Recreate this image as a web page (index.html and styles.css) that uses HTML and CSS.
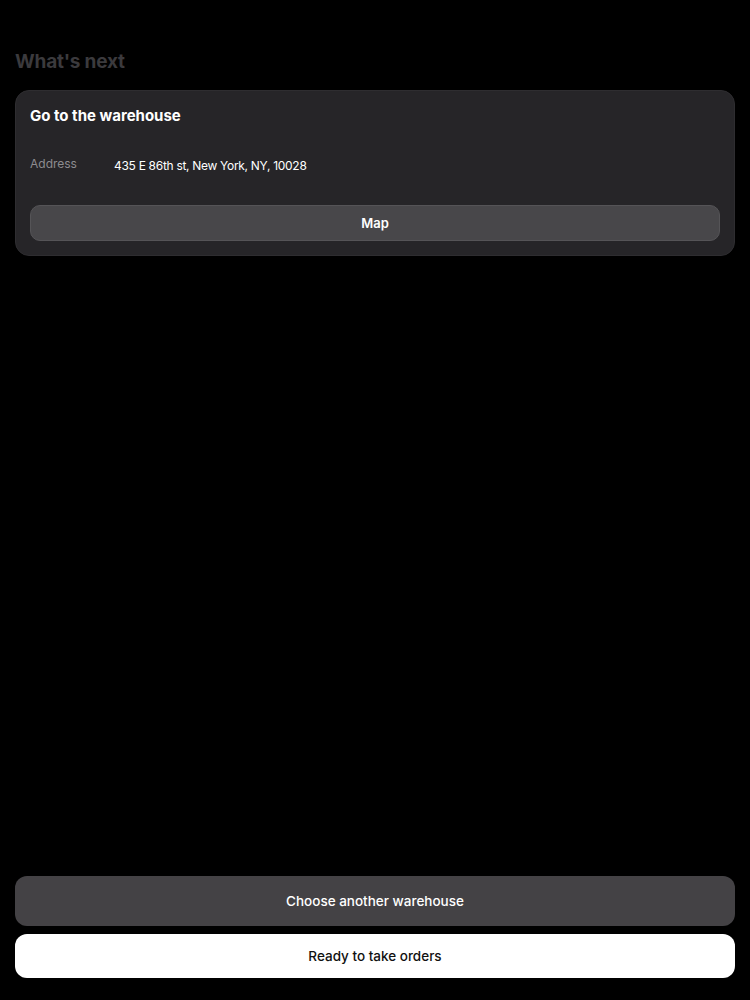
FILE: index.html
```html
<!DOCTYPE html>
<html>
<head>
<meta charset="utf-8">
<link rel="stylesheet" href="styles.css">
</head>
<body>
<div class="page">
  <main class="content">
    <h2 class="section-title">What's next</h2>
    <section class="card">
      <h3 class="card-title">Go to the warehouse</h3>
      <div class="row">
        <span class="label">Address</span>
        <span class="value">435 E 86th st, New York, NY, 10028</span>
      </div>
      <button class="btn btn-map">Map</button>
    </section>
  </main>
  <footer class="actions">
    <button class="btn btn-secondary">Choose another warehouse</button>
    <button class="btn btn-primary">Ready to take orders</button>
  </footer>
</div>
</body>
</html>
```
FILE: styles.css
```css
* { box-sizing: border-box; }
html, body { margin: 0; padding: 0; background: #000; }
body { font-family: Inter, "Noto Sans", sans-serif; color: #fff; }
.page {
  height: 1000px;
  display: flex;
  flex-direction: column;
  padding: 0 15px 22px;
}
.content { flex: 1; padding-top: 51px; }
.section-title {
  margin: 0 0 17px;
  font-size: 19px;
  line-height: 22px;
  font-weight: 700;
  color: #3b3a3d;
  letter-spacing: -0.2px;
}
.card {
  background: #262528;
  border: 1px solid #2e2d30;
  border-radius: 14px;
  padding: 14px 14px 14px;
}
.card-title {
  margin: 0;
  font-size: 15px;
  line-height: 22px;
  font-weight: 700;
  color: #fff;
}
.row {
  display: flex;
  align-items: baseline;
  margin-top: 30px;
  font-size: 12px;
  line-height: 18px;
}
.label { width: 84px; color: #8d8c90; font-size: 12px; position: relative; top: -2px; }
.value { color: #fff; letter-spacing: -0.3px; }
.btn {
  display: block;
  width: 100%;
  border: none;
  font-family: inherit;
  cursor: pointer;
}
.btn-map {
  margin-top: 30px;
  height: 36px;
  border-radius: 10px;
  background: #48474a;
  border: 1px solid #555457;
  color: #fff;
  font-size: 13px;
  font-weight: 600;
}
.actions { display: flex; flex-direction: column; gap: 8px; }
.btn-secondary {
  height: 50px;
  border-radius: 12px;
  background: #444245;
  color: #fff;
  font-size: 13.5px;
  font-weight: 500;
}
.btn-primary {
  height: 44px;
  border-radius: 12px;
  background: #fff;
  color: #111;
  font-size: 13.5px;
  font-weight: 500;
}
```
